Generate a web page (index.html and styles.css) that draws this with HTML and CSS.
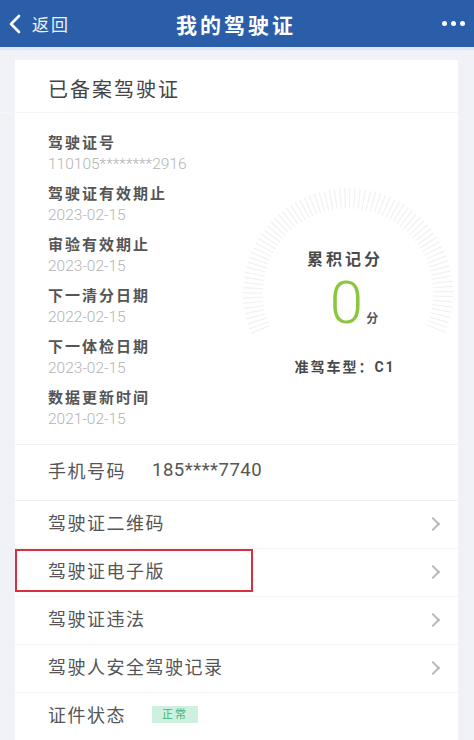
FILE: index.html
```html
<!DOCTYPE html>
<html lang="zh-CN">
<head>
    <meta charset="UTF-8">
    <meta name="viewport" content="width=device-width, initial-scale=1.0">
    <title>我的驾驶证</title>
    <link rel="stylesheet" href="styles.css">
</head>
<body>
    <div class="topbar">
        <div class="back">
            <svg width="16" height="20" viewBox="0 0 16 20"><path d="M12 2 L4 10 L12 18" fill="none" stroke="#fff" stroke-width="2.6" stroke-linecap="round" stroke-linejoin="round"/></svg>
            <span>返回</span>
        </div>
        <div class="title">我的驾驶证</div>
        <div class="more"><i></i><i></i><i></i></div>
    </div>

    <div class="card">
        <div class="card-title">已备案驾驶证</div>

        <div class="info">
            <div class="fields">
                <div class="field"><div class="label">驾驶证号</div><div class="value">110105********2916</div></div>
                <div class="field"><div class="label">驾驶证有效期止</div><div class="value">2023-02-15</div></div>
                <div class="field"><div class="label">审验有效期止</div><div class="value">2023-02-15</div></div>
                <div class="field"><div class="label">下一清分日期</div><div class="value">2022-02-15</div></div>
                <div class="field"><div class="label">下一体检日期</div><div class="value">2023-02-15</div></div>
                <div class="field"><div class="label">数据更新时间</div><div class="value">2021-02-15</div></div>
            </div>

            <div class="gauge">
                <svg class="ring" width="220" height="220" viewBox="0 0 220 220">
                    <path d="M22.4 147.1 A95 95 0 1 1 197.6 147.1" fill="none" stroke="#f0f0f0" stroke-width="20" stroke-dasharray="1.1 3.6"/>
                </svg>
                <div class="gauge-text">
                    <div class="gauge-label">累积记分</div>
                    <div class="score"><span class="num">0</span><span class="unit">分</span></div>
                    <div class="car-type">准驾车型：C1</div>
                </div>
            </div>
        </div>

        <div class="row phone"><span class="row-name">手机号码</span><span class="phone-num">185****7740</span></div>
        <div class="row"><span class="row-name">驾驶证二维码</span><span class="arrow"></span></div>
        <div class="row marked"><span class="row-name">驾驶证电子版</span><span class="arrow"></span><span class="mark"></span></div>
        <div class="row"><span class="row-name">驾驶证违法</span><span class="arrow"></span></div>
        <div class="row"><span class="row-name">驾驶人安全驾驶记录</span><span class="arrow"></span></div>
        <div class="row last"><span class="row-name">证件状态</span><span class="tag">正常</span></div>
    </div>
</body>
</html>
```

FILE: styles.css
```css
body {
    margin: 0;
    width: 474px;
    height: 740px;
    overflow: hidden;
    background: #f1f2f7;
    font-family: Roboto, "Noto Sans CJK SC", sans-serif;
}
.topbar {
    height: 47px;
    background: #2b5ea8;
    border-bottom: 3px solid #dfe8f4;
    display: flex;
    align-items: center;
    justify-content: space-between;
    padding: 0 8px 0 7px;
    color: #fff;
}
.back {
    display: flex;
    align-items: center;
    width: 100px;
    font-size: 17px;
    letter-spacing: 2px;
    color: #eef2f9;
}
.back svg {
    margin-right: 9px;
}
.title {
    font-size: 21px;
    font-weight: bold;
    letter-spacing: 3px;
}
.more {
    width: 100px;
    display: flex;
    justify-content: flex-end;
    gap: 4px;
    padding-right: 1px;
}
.more i {
    width: 5px;
    height: 5px;
    border-radius: 50%;
    background: #fff;
}
.card {
    margin: 10px 16px 0 15px;
    background: #fff;
}
.card-title {
    padding: 18px 0 0 48px;
    margin-left: -15px;
    height: 34px;
    line-height: 24px;
    font-size: 20px;
    letter-spacing: 2px;
    color: #444;
    border-bottom: 1px solid #f6f6f6;
}
.info {
    display: flex;
    padding: 20px 0 0 33px;
    height: 311px;
    border-bottom: 1px solid #f0f0f0;
}
.fields {
    width: 190px;
}
.field {
    margin-bottom: 9px;
}
.label {
    font-size: 15px;
    line-height: 21px;
    font-weight: bold;
    letter-spacing: 2px;
    color: #555;
}
.value {
    font-size: 15.5px;
    line-height: 21px;
    font-weight: 300;
    color: #b3b3b3;
}
.gauge {
    display: grid;
    width: 220px;
    height: 220px;
    margin: 50px 0 0 2px;
}
.ring, .gauge-text {
    grid-area: 1 / 1;
}
.gauge-text {
    display: flex;
    flex-direction: column;
    align-items: center;
    padding: 66px 6px 0 0;
}
.gauge-label {
    font-size: 16px;
    line-height: 22px;
    font-weight: bold;
    letter-spacing: 3px;
    color: #4a4a4a;
}
.score {
    display: flex;
    align-items: baseline;
    height: 70px;
    margin-left: 18px;
}
.num {
    font-size: 60px;
    line-height: 64px;
    font-weight: 300;
    color: #8cc63e;
}
.unit {
    font-size: 12px;
    font-weight: bold;
    color: #555;
    margin-left: 3px;
}
.car-type {
    margin-top: 15px;
    font-size: 14px;
    font-weight: bold;
    letter-spacing: 2px;
    color: #4a4a4a;
}
.row {
    position: relative;
    box-sizing: border-box;
    height: 48px;
    display: flex;
    align-items: center;
    padding: 0 20px 6px 33px;
    border-bottom: 1px solid #f2f2f2;
    font-size: 18px;
    letter-spacing: 1.5px;
    color: #555;
}
.row.phone {
    height: 56px;
    border-bottom-color: #eeeeee;
}
.row.last {
    border-bottom: none;
}
.row-name {
    flex: 1;
}
.row.phone .row-name,
.row.last .row-name {
    flex: none;
    width: 104px;
}
.phone-num {
    font-size: 18.5px;
    letter-spacing: 0.5px;
    color: #555;
}
.arrow {
    width: 8px;
    height: 8px;
    margin-top: 4px;
    border-top: 2px solid #b8b8b8;
    border-right: 2px solid #b8b8b8;
    transform: rotate(45deg);
}
.mark {
    position: absolute;
    left: 0;
    top: 0;
    width: 234px;
    height: 39px;
    border: 2px solid #d8303e;
}
.tag {
    padding: 0 10px;
    height: 17px;
    line-height: 17px;
    font-size: 11px;
    letter-spacing: 2px;
    color: #3bb47b;
    background: #cdf0df;
}
```
